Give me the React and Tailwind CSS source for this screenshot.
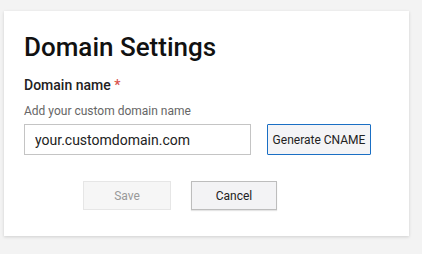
export default function App() {
  return (
    <div className="h-[254px] w-[422px] bg-[#f3f3f3] pt-[11px] pl-[4px] font-['Roboto',sans-serif]">
      <div className="w-[405px] h-[225px] bg-white shadow-[0_1px_3px_rgba(0,0,0,0.15)] pl-[20px] pt-[21px]">
        <h1 className="text-[26px] leading-[30px] font-medium text-[#111]">Domain Settings</h1>
        <div className="mt-[15px] text-[14px] leading-[16px] font-medium text-[#222]">
          Domain name <span className="text-[#d9534f]">*</span>
        </div>
        <div className="mt-[11px] text-[12px] leading-[14px] text-[#666]">Add your custom domain name</div>
        <div className="mt-[6px] flex items-center">
          <input
            readOnly
            value="your.customdomain.com"
            className="w-[227px] h-[31px] border border-[#c4c4c4] px-[10px] text-[14px] text-[#222] outline-none"
          />
          <button className="ml-[16px] h-[31px] w-[104px] border border-[#1a6fc4] bg-[#f4f4f6] text-[12px] text-[#222] rounded-[1px]">
            Generate CNAME
          </button>
        </div>
        <div className="mt-[26px] flex pl-[59px] gap-[20px]">
          <button className="w-[88px] h-[29px] border border-[#e6e6e6] bg-[#f6f6f6] text-[12px] text-[#999]">Save</button>
          <button className="w-[86px] h-[29px] border border-[#bdbdbd] bg-[#f3f3f5] text-[12px] text-[#222] shadow-[0_1px_1px_rgba(0,0,0,0.1)]">Cancel</button>
        </div>
      </div>
    </div>
  );
}
